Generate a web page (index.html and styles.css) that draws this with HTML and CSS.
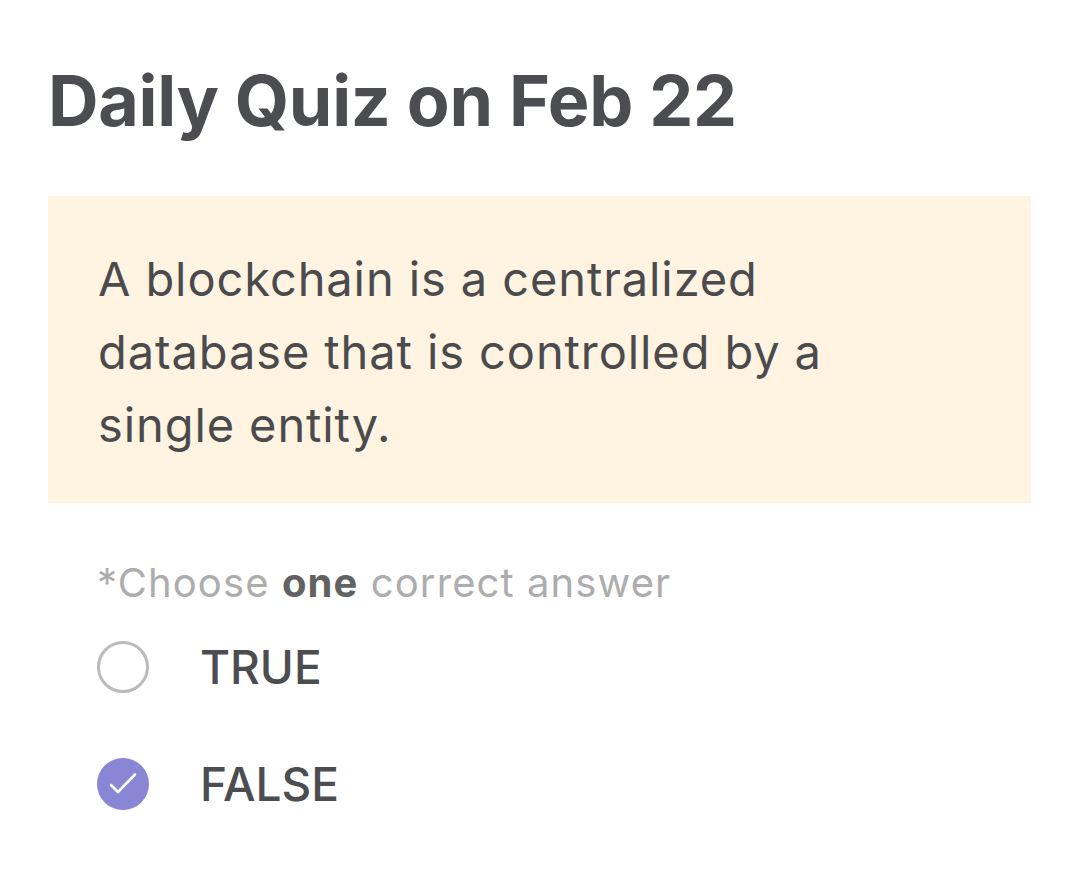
FILE: index.html
```html
<!DOCTYPE html>
<html>
<head>
<meta charset="utf-8">
<link rel="stylesheet" href="styles.css">
</head>
<body>
<main class="quiz">
  <h1 class="title">Daily Quiz on Feb 22</h1>
  <div class="question">
    <p>A blockchain is a centralized database that is controlled by a single entity.</p>
  </div>
  <p class="hint">*Choose <b>one</b> correct answer</p>
  <ul class="options">
    <li class="option">
      <span class="radio"></span>
      <span class="label">TRUE</span>
    </li>
    <li class="option">
      <span class="radio checked">
        <svg viewBox="0 0 52 52" width="52" height="52"><path d="M14 27 L21 34 L38 16.5" fill="none" stroke="#fff" stroke-width="2.6" stroke-linecap="round" stroke-linejoin="round"/></svg>
      </span>
      <span class="label">FALSE</span>
    </li>
  </ul>
</main>
</body>
</html>
```
FILE: styles.css
```css
html, body {
  margin: 0;
  padding: 0;
  background: #ffffff;
}
body {
  font-family: Inter, "Noto Sans", sans-serif;
  color: #4b4d50;
}
.quiz {
  padding: 60px 49px 0 48px;
}
.title {
  margin: 0;
  font-size: 70px;
  font-weight: 700;
  letter-spacing: -0.3px;
  line-height: 82px;
  color: #4b4d50;
}
.question {
  margin-top: 54px;
  background: #fff4e2;
  padding: 46px 50px 42px 50px;
}
.question p {
  margin: 0;
  font-size: 47px;
  letter-spacing: 0.9px;
  line-height: 73px;
  color: #4b4a4d;
  max-width: 800px;
}
.hint {
  margin: 50px 0 0 49px;
  font-size: 40px;
  letter-spacing: 1.1px;
  line-height: 60px;
  color: #adadad;
}
.hint b {
  color: #626262;
  font-weight: 700;
}
.options {
  list-style: none;
  margin: 25px 0 0 49px;
  padding: 0;
}
.option {
  display: flex;
  align-items: center;
  height: 58px;
  margin-bottom: 59px;
}
.radio {
  width: 52px;
  height: 52px;
  box-sizing: border-box;
  border: 3px solid #bbbbbb;
  border-radius: 50%;
  flex: none;
}
.radio.checked {
  border: none;
  background: #8986d5;
}
.radio svg {
  display: block;
}
.label {
  margin-left: 51px;
  font-size: 46px;
  font-weight: 500;
  color: #4b4d50;
}
```
